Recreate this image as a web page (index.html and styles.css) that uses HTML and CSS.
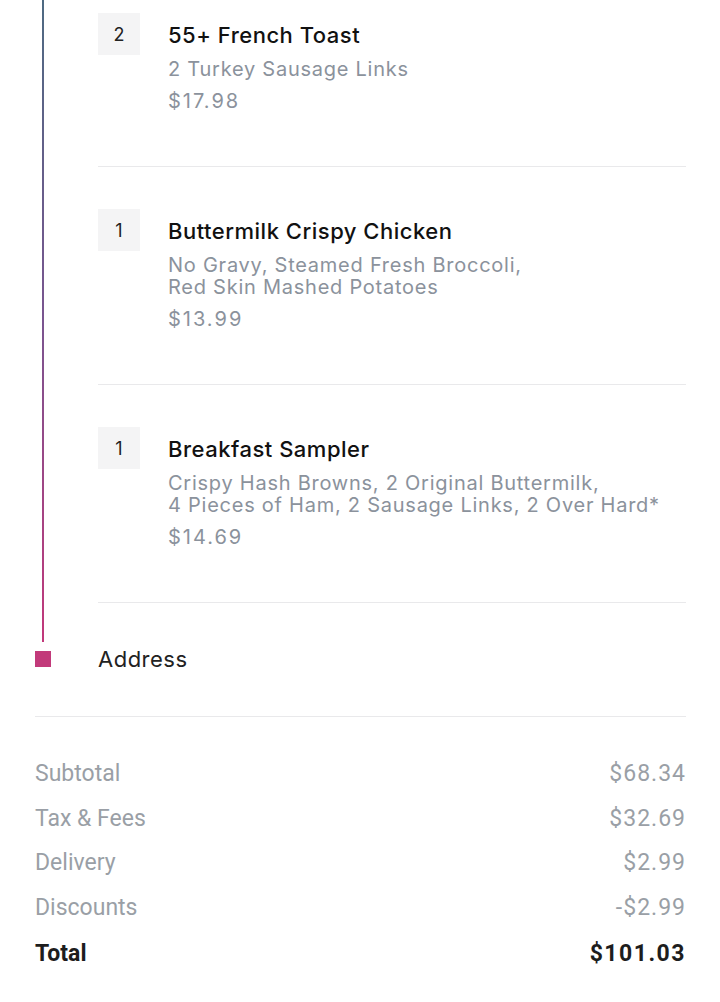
FILE: index.html
```html
<!DOCTYPE html>
<html lang="en">
<head>
<meta charset="utf-8">
<title>Order</title>
<link rel="stylesheet" href="styles.css">
</head>
<body>
<div class="page">
  <div class="timeline">
    <div class="rail">
      <div class="rail-line"></div>
      <div class="rail-dot"></div>
    </div>
    <div class="content">
      <div class="item item-first">
        <div class="qty">2</div>
        <div class="info">
          <div class="title">55+ French Toast</div>
          <div class="mods">2 Turkey Sausage Links</div>
          <div class="price">$17.98</div>
        </div>
      </div>
      <div class="item">
        <div class="qty">1</div>
        <div class="info">
          <div class="title">Buttermilk Crispy Chicken</div>
          <div class="mods">No Gravy, Steamed Fresh Broccoli,<br>Red Skin Mashed Potatoes</div>
          <div class="price">$13.99</div>
        </div>
      </div>
      <div class="item">
        <div class="qty">1</div>
        <div class="info">
          <div class="title">Breakfast Sampler</div>
          <div class="mods">Crispy Hash Browns, 2 Original Buttermilk,<br>4 Pieces of Ham, 2 Sausage Links, 2 Over Hard*</div>
          <div class="price">$14.69</div>
        </div>
      </div>
      <div class="address">Address</div>
    </div>
  </div>
  <div class="summary">
    <div class="row"><span>Subtotal</span><span class="amt">$68.34</span></div>
    <div class="row"><span>Tax &amp; Fees</span><span class="amt">$32.69</span></div>
    <div class="row"><span>Delivery</span><span class="amt">$2.99</span></div>
    <div class="row"><span>Discounts</span><span class="amt">-$2.99</span></div>
    <div class="row row-total"><span>Total</span><span class="amt">$101.03</span></div>
  </div>
</div>
</body>
</html>
```

FILE: styles.css
```css
* { box-sizing: border-box; }
html, body { margin: 0; padding: 0; background: #ffffff; }
body { font-family: Inter, "Noto Sans", sans-serif; color: #111; }

.page { width: 720px; padding: 0 34px 0 35px; }

.timeline { display: flex; border-bottom: 1px solid #e9e9eb; padding-bottom: 45px; }

.rail {
  width: 63px;
  flex: none;
  display: flex;
  flex-direction: column;
  padding-bottom: 4px;
}
.rail-line {
  flex: 1;
  width: 2px;
  margin-left: 7px;
  margin-bottom: 9px;
  background: linear-gradient(to bottom, #4e6a82 0%, #7a5590 50%, #c2387a 100%);
}
.rail-dot { width: 16px; height: 16px; background: #c23a7a; }

.content { flex: 1; }

.item {
  display: flex;
  gap: 28px;
  padding: 42px 0 54px;
  border-bottom: 1px solid #e9e9eb;
}
.item-first { padding-top: 13px; }

.qty {
  flex: none;
  width: 42px;
  height: 42px;
  background: #f4f4f5;
  color: #222;
  font-size: 18px;
  display: flex;
  align-items: center;
  justify-content: center;
}

.info { flex: 1; padding-top: 8px; }
.title { font-size: 22px; line-height: 28px; font-weight: 500; color: #111; letter-spacing: 0.5px; }
.mods { margin-top: 9px; font-size: 20px; line-height: 22px; color: #8b929c; letter-spacing: 0.75px; }
.price { margin-top: 10px; font-size: 20px; line-height: 22px; color: #8b929c; letter-spacing: 2px; }

.address { padding-top: 44px; font-size: 22px; line-height: 24px; color: #222; letter-spacing: 0.5px; }

.summary { padding-top: 45px; display: flex; flex-direction: column; gap: 20.5px; }
.row {
  display: flex;
  justify-content: space-between;
  font-family: Roboto, sans-serif;
  font-size: 23px;
  line-height: 24px;
  color: #9a9fa6;
}
.row .amt { letter-spacing: 1px; }
.row-total { margin-top: 1.5px; font-weight: 700; color: #1d1d1d; }
.row-total .amt { letter-spacing: 1.5px; }
```
